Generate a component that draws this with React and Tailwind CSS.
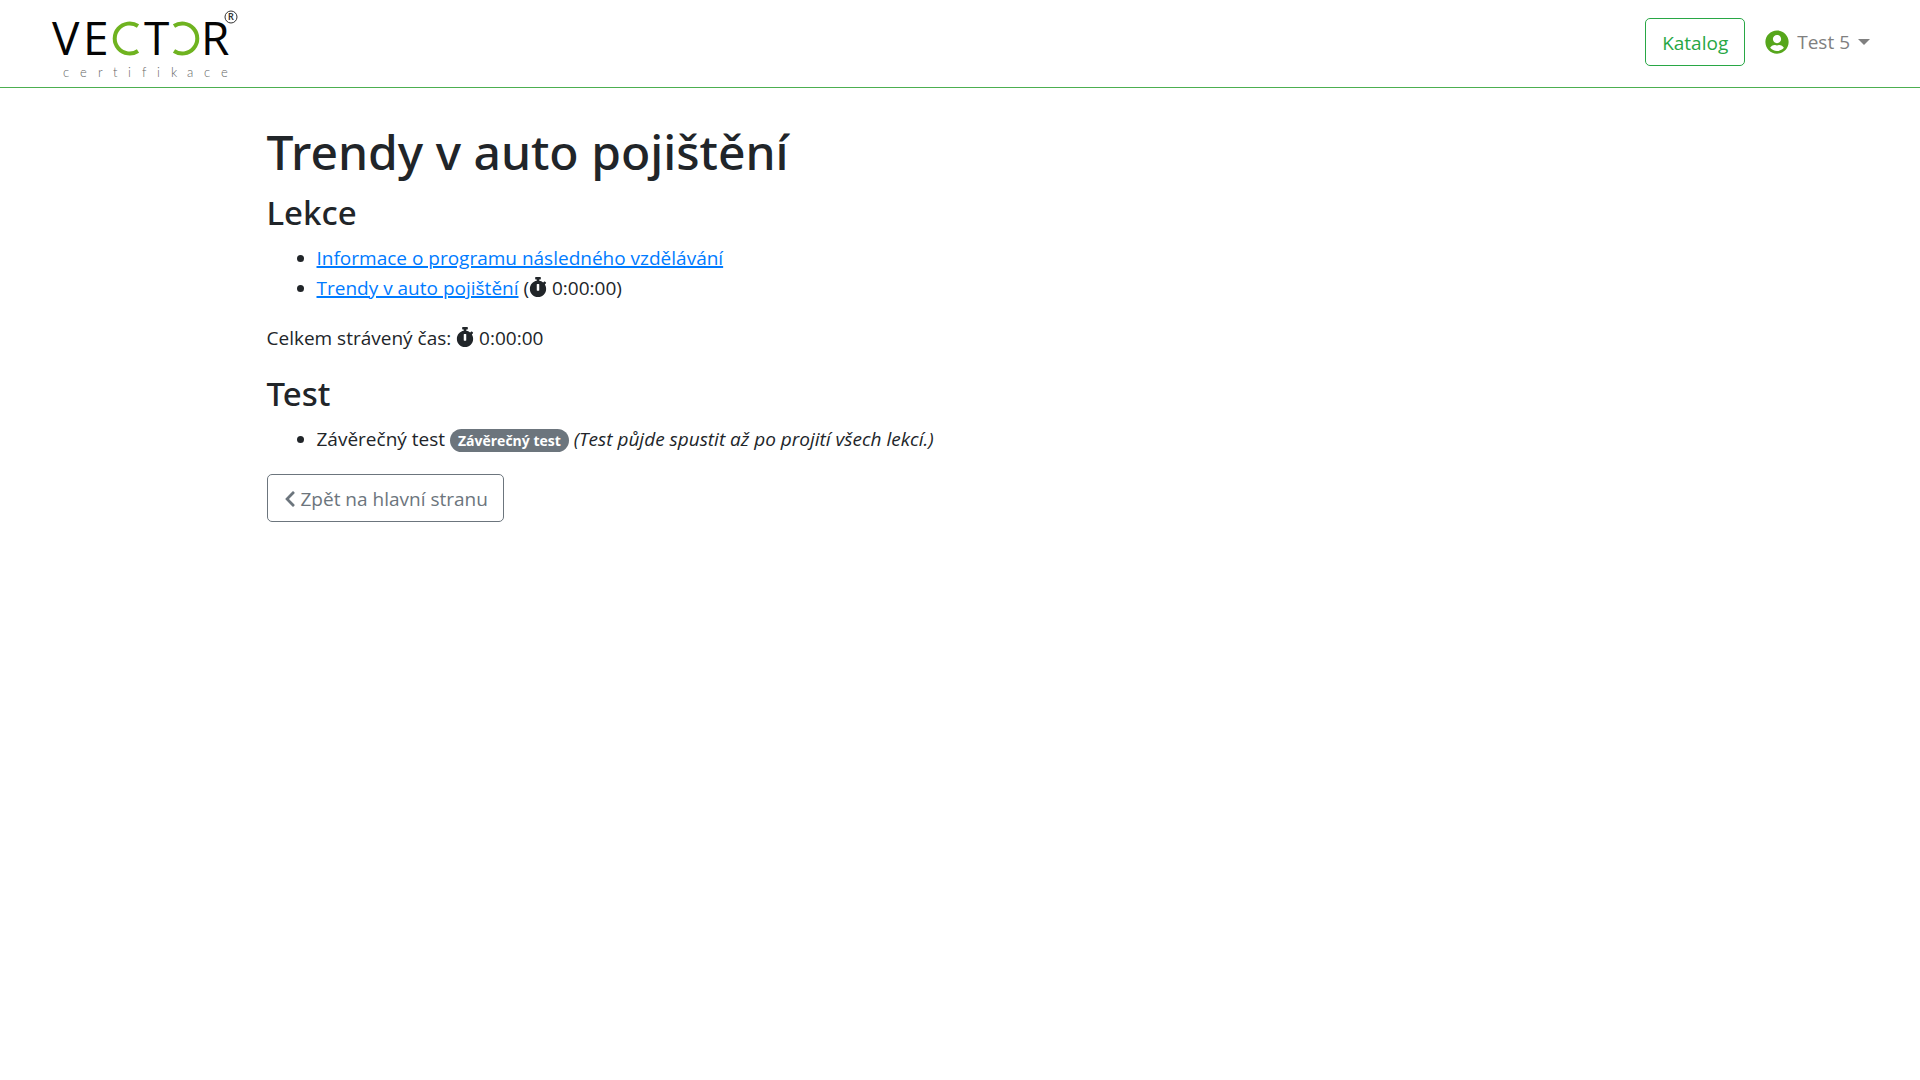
import { FaUserCircle, FaChevronLeft } from "react-icons/fa";

function Logo() {
  return (
    <svg width="190" height="72" viewBox="0 0 190 72" role="img" aria-label="Vector certifikace" className="block overflow-visible">
      <g fontFamily="Open Sans, sans-serif" fontSize="46" fill="#050505">
        <text x="2" y="47">V</text>
        <text x="33" y="47">E</text>
        <text x="94" y="47">T</text>
        <text x="151" y="47">R</text>
      </g>
      <g fill="none" stroke="#6fb320" strokeWidth="4">
        <path d="M88 18 A15 15 0 1 0 88 43" />
        <path d="M124 18 A15 15 0 1 1 124 43" />
      </g>
      <circle cx="181" cy="9" r="6" fill="none" stroke="#333" strokeWidth="1" />
      <text x="181" y="12" textAnchor="middle" fontFamily="Lato, sans-serif" fontSize="9" fontWeight="700" fill="#333">R</text>
      <text x="13 30 48 63 78 92 107 121 137 154 171" y="69" fontFamily="Lato, sans-serif" fontWeight="300" fontSize="13" fill="#666">
        certifikace
      </text>
    </svg>
  );
}

function Stopwatch() {
  return (
    <svg width="18" height="20" viewBox="0 0 448 512" fill="currentColor" aria-hidden="true" className="inline-block align-[-2px]">
      <path d="M432 304c0 114.9-93.100 208-208 208S16 418.900 16 304c0-104 76.300-190.200 176-205.500V64h-28c-6.600 0-12-5.400-12-12V12c0-6.600 5.400-12 12-12h120c6.600 0 12 5.400 12 12v40c0 6.600-5.400 12-12 12h-28v34.500c37.500 5.800 71.700 21.600 99.700 44.600l27.500-27.500c4.700-4.700 12.300-4.700 17 0l28.300 28.300c4.700 4.700 4.700 12.300 0 17l-29.400 29.400-.6.6C419.700 223.300 432 262.200 432 304zm-176 36V188.500c0-6.600-5.400-12-12-12h-40c-6.600 0-12 5.400-12 12V340c0 6.600 5.400 12 12 12h40c6.600 0 12-5.400 12-12z" />
    </svg>
  );
}

export default function App() {
  return (
    <div className="min-h-screen bg-white font-['Open_Sans',sans-serif] text-[19px] leading-[30px] text-[#212529]">
      <header className="flex items-center justify-between border-b border-[#4caf50] pt-2 pr-[50px] pb-[7px] pl-[50px]">
        <a href="#">
          <Logo />
        </a>
        <nav className="flex items-center gap-5 pb-1">
          <a href="#" className="rounded-[5px] border border-[#28a745] px-4 pt-[9px] pb-[7px] text-[#28a745]">
            Katalog
          </a>
          <button type="button" className="flex items-center gap-2 text-[#808080]">
            <FaUserCircle size={24} color="#56a61c" />
            Test 5
            <svg width="12" height="6" viewBox="0 0 12 6" fill="currentColor" aria-hidden="true">
              <path d="M0 0h12L6 6z" />
            </svg>
          </button>
        </nav>
      </header>

      <main className="mx-auto max-w-[1425px] px-[19px] pt-[34px]">
        <h1 className="mb-[10px] font-['Noto_Sans',sans-serif] text-[48px] leading-[60px] font-medium">Trendy v auto pojištění</h1>

        <h2 className="mb-[9px] font-['Noto_Sans',sans-serif] text-[33px] leading-[42px] font-medium">Lekce</h2>
        <ul className="mb-5 list-disc pl-[50px]">
          <li>
            <a href="#" className="text-[#007bff] underline decoration-2">Informace o programu následného vzdělávání</a>
          </li>
          <li>
            <a href="#" className="text-[#007bff] underline decoration-2">Trendy v auto pojištění</a> (<Stopwatch /> 0:00:00)
          </li>
        </ul>
        <p className="mb-5">
          Celkem strávený čas: <Stopwatch /> 0:00:00
        </p>

        <h2 className="mb-[9px] font-['Noto_Sans',sans-serif] text-[33px] leading-[42px] font-medium">Test</h2>
        <ul className="mb-5 list-disc pl-[50px]">
          <li>
            Závěrečný test{" "}
            <span className="inline-block rounded-full bg-[#6c757d] px-2 py-1 text-[14px] leading-[15px] font-bold text-white">
              Závěrečný test
            </span>{" "}
            <em>(Test půjde spustit až po projití všech lekcí.)</em>
          </li>
        </ul>
        <a href="#" className="inline-flex items-center gap-1 rounded-[5px] border border-[#6c757d] px-[15px] pt-[9px] pb-[7px] text-[#6c757d]">
          <FaChevronLeft size={18} className="-mx-0.5" />
          Zpět na hlavní stranu
        </a>
      </main>
    </div>
  );
}
